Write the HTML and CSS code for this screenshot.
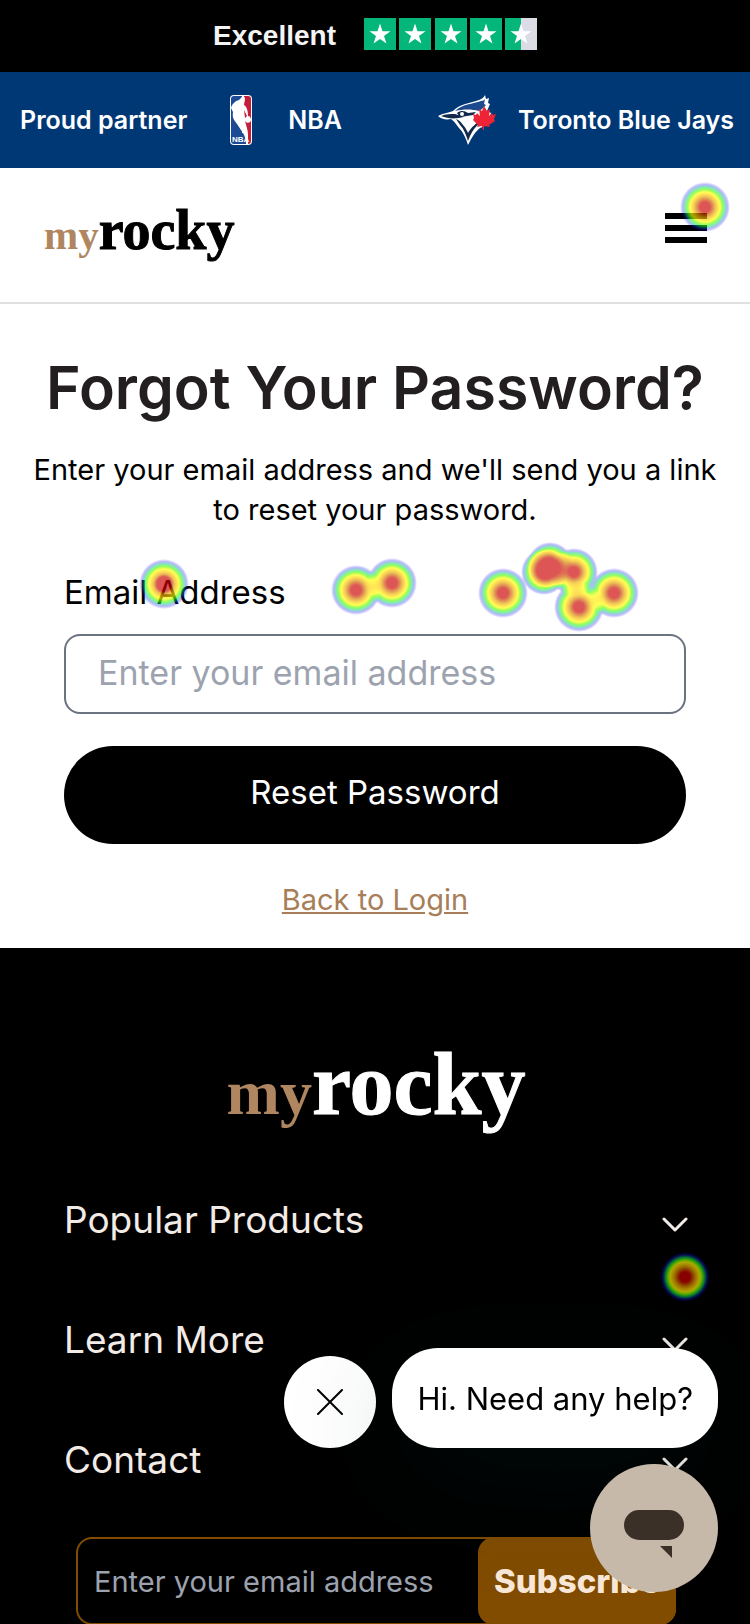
FILE: index.html
```html
<!DOCTYPE html>
<html lang="en">
<head>
<meta charset="utf-8">
<meta name="viewport" content="width=device-width, initial-scale=1">
<title>Forgot Your Password? | myrocky</title>
<link rel="stylesheet" href="styles.css">
</head>
<body>
<div class="rating">
  <span class="rating-word">Excellent</span>
  <svg class="rating-stars" width="173" height="32" viewBox="0 0 173 32" role="img" aria-label="4.5 out of 5 stars">
    <defs><path id="star" fill="#fff" d="M16 5.500l2.500 7.700h8l-6.500 4.700 2.500 7.700-6.500-4.700-6.500 4.700 2.500-7.700-6.500-4.700h8z"/></defs>
    <g fill="#04b67a">
      <rect width="32" height="32"/><rect x="35" width="32" height="32"/><rect x="71" width="32" height="32"/><rect x="106" width="32" height="32"/><rect x="141" width="16" height="32"/>
    </g>
    <rect x="157" width="16" height="32" fill="#dcdce6"/>
    <use href="#star"/><use href="#star" x="35"/><use href="#star" x="71"/><use href="#star" x="106"/><use href="#star" x="141"/>
  </svg>
</div>

<div class="partners">
  <span>Proud partner</span>
  <span class="partner">
    <svg width="22" height="50" viewBox="0 0 22 50" aria-hidden="true">
      <rect width="22" height="50" rx="4" fill="#fff"/>
      <path d="M4 1h8v48H4a3 3 0 0 1-3-3V4a3 3 0 0 1 3-3z" fill="#1d4a94"/>
      <path d="M11 38h6v11h-6z" fill="#1d4a94"/>
      <path d="M14 1h4a3 3 0 0 1 3 3v42a3 3 0 0 1-3 3h-1c1-9-1-15-4-20z" fill="#c41e3a"/>
      <path d="M11 3c1-2 4-2 4 1 0 2-1 4-1 6 3 2 4 6 4 11 2 0 3 2 3 4s-3 4-5 2l-1-1c1 4 3 9 3 14v9h-2c0-4-1-8-3-11-2-3-4-6-6-9-3-4-5-6-4-12l-2-4c1-4 4-7 8-8z" fill="#fff"/>
      <path d="M14 15l3 6-2 2z" fill="#c41e3a"/>
      <text x="2" y="47" class="nba-mark">NBA</text>
    </svg>
    <span>NBA</span>
  </span>
  <span class="partner partner-jays">
    <svg width="58" height="50" viewBox="0 0 58 50" aria-hidden="true">
      <path d="M0 21c5-3 10-3 15-5 6-7 18-8 26-11 3-1 5-3 6-5l1 4 3-1-1 5 2 1-3 7 4 2-4 12-7 3c-5 4-8 9-12 17-2-7-5-13-9-17-3-4-5-7-8-9-5 1-10 0-13-3z" fill="#fff"/>
      <path d="M17 16c7-7 18-7 26-10 2 0 3-1 4-2l-1 5 2 1-4 4-3 2c-8-2-15-2-24 0z" fill="#1d4a8c"/>
      <path d="M3 21c5-2 9-2 14-2l9 3c-8 2-16 2-23-1z" fill="#13294b"/>
      <path d="M18 24c3 1 5 3 7 6 3 3 4 6 5 8 3-5 5-7 9-10l2 1c-5 4-8 9-11 17-2-6-4-12-8-16z" fill="#13294b"/>
      <path d="M19 18c4-3 8-2 11 0l8-1-3 3-12 2c-2-1-3-2-4-4z" fill="#13294b"/>
      <circle cx="24" cy="19" r="2" fill="#fff"/>
      <path d="M46 11l3 5 3-2-1 7 3-3 1 2 3-1-2 5 1 2-6 4 1 2-6-1v4h-1l-1-4-5 1 1-2-5-5 1-2-1-4 3 1 1-2 3 3-1-7 3 2z" fill="#ee2436"/>
    </svg>
    <span>Toronto Blue Jays</span>
  </span>
</div>

<header class="header">
  <a class="logo" href="#home" aria-label="myrocky"><span class="logo-my">my</span><span class="logo-rocky">rocky</span></a>
  <button class="menu" type="button" aria-label="Open menu"><i></i><i></i><i></i></button>
</header>

<main class="main">
  <h1 class="title">Forgot Your Password?</h1>
  <p class="lead">Enter your email address and we'll send you a link to reset your password.</p>
  <form class="form">
    <label class="label" for="email">Email Address</label>
    <input class="field" id="email" type="email" placeholder="Enter your email address">
    <button class="submit" type="submit">Reset Password</button>
    <a class="back" href="#login">Back to Login</a>
  </form>
</main>

<footer class="footer">
  <a class="logo logo-large" href="#home" aria-label="myrocky"><span class="logo-my">my</span><span class="logo-rocky">rocky</span></a>
  <nav class="sections">
    <button class="section" type="button">Popular Products
      <svg width="26" height="16" viewBox="0 0 26 16" aria-hidden="true"><path d="M2 2l11 11L24 2"/></svg></button>
    <button class="section" type="button">Learn More
      <svg width="26" height="16" viewBox="0 0 26 16" aria-hidden="true"><path d="M2 2l11 11L24 2"/></svg></button>
    <button class="section" type="button">Contact
      <svg width="26" height="16" viewBox="0 0 26 16" aria-hidden="true"><path d="M2 2l11 11L24 2"/></svg></button>
  </nav>
  <form class="newsletter">
    <input class="newsletter-field" type="email" aria-label="Email for newsletter" placeholder="Enter your email address">
    <button class="newsletter-button" type="submit">Subscribe</button>
  </form>
</footer>

<aside class="chat">
  <div class="chat-row">
    <button class="chat-close" type="button" aria-label="Dismiss message">
      <svg width="26" height="26" viewBox="0 0 26 26" aria-hidden="true"><path d="M1 1l24 24M25 1L1 25" stroke="#000" stroke-width="2" stroke-linecap="round"/></svg>
    </button>
    <button class="chat-message" type="button">Hi. Need any help?</button>
  </div>
  <button class="chat-open" type="button" aria-label="Open chat">
    <svg width="60" height="48" viewBox="0 0 60 48" aria-hidden="true"><rect width="60" height="30" rx="15" fill="#3b3028"/><path d="M36 36h12v12z" fill="#3b3028"/></svg>
  </button>
</aside>

<svg class="heatmap" width="750" height="1320" viewBox="0 0 750 1320" aria-hidden="true">
  <defs>
    <radialGradient id="heat"><stop offset="0" stop-color="#fff"/><stop offset="1" stop-color="#fff" stop-opacity="0"/></radialGradient>
    <filter id="ramp" filterUnits="userSpaceOnUse" x="0" y="0" width="750" height="1320" color-interpolation-filters="sRGB">
      <feColorMatrix values="0 0 0 1 0  0 0 0 1 0  0 0 0 1 0  0 0 0 1 0"/>
      <feComponentTransfer>
        <feFuncR type="table" tableValues="0 .1 0 .4 1 1 .88 .82 .8 .8 .8"/>
        <feFuncG type="table" tableValues="0 .1 .85 1 1 .8 .6 .3 0 0 0"/>
        <feFuncB type="table" tableValues="1 1 .4 0 0 0 0 0 0 0 0"/>
        <feFuncA type="table" tableValues="0 .3 .5 .66 .67 .67 .67 .67 .67 .67 .67"/>
      </feComponentTransfer>
    </filter>
  </defs>
  <g filter="url(#ramp)" fill="url(#heat)">
    <circle cx="705" cy="207" r="25"/>
    <circle cx="164" cy="584" r="25"/><circle cx="164" cy="584" r="10"/>
    <circle cx="356" cy="590" r="25"/><circle cx="392" cy="583" r="25"/>
    <circle cx="503" cy="593" r="25"/><circle cx="544" cy="572" r="23"/>
    <circle cx="550" cy="565" r="23"/><circle cx="574" cy="572" r="24"/>
    <circle cx="579" cy="607" r="25"/><circle cx="614" cy="593" r="25"/>
    <circle cx="685" cy="1277" r="25"/>
  </g>
</svg>
</body>
</html>
```
FILE: styles.css
```css
* { box-sizing: border-box; }
body { margin: 0; position: relative; background: #fff; color: #000; font-family: Inter, "Open Sans", sans-serif; }
button, input { font: inherit; color: inherit; border: 0; margin: 0; padding: 0; background: none; }
svg { display: block; flex: none; fill: none; }
a { color: inherit; }

.rating { display: flex; align-items: center; justify-content: center; gap: 28px; height: 72px; padding-bottom: 4px; background: #000; color: #f4f4f4; }
.rating-word { padding-top: 4px; font: 700 28px/32px "Liberation Sans", sans-serif; }

.partners { display: flex; align-items: center; gap: 43px; height: 96px; padding: 0 20px; background: #003876; color: #fff; font-size: 25px; font-weight: 600; line-height: 32px; white-space: nowrap; overflow: hidden; }
.partner { display: flex; align-items: center; gap: 36px; }
.partner-jays { gap: 22px; margin-left: 53px; }
.nba-mark { font: 700 8px "Liberation Sans", sans-serif; fill: #fff; }

.header { display: flex; align-items: flex-start; justify-content: space-between; height: 136px; padding: 34px 43px 0 44px; border-bottom: 2px solid #e0e0e0; }
.logo { display: flex; align-items: baseline; font-family: "Liberation Serif", serif; font-weight: 700; font-size: 56px; line-height: 56px; text-decoration: none; -webkit-text-stroke: 1px currentColor; }
.logo-my { color: #b08660; font-size: 41px; -webkit-text-stroke: 0; }
.menu { display: flex; flex-direction: column; gap: 6px; width: 42px; margin-top: 11px; }
.menu i { height: 6px; background: #000; }

.main { padding: 44px 20px 28px; text-align: center; }
.title { margin: 0; color: #231f20; font-size: 59px; font-weight: 600; line-height: 80px; }
.lead { margin: 22px 0 0; font-size: 29px; line-height: 40px; }
.form { display: flex; flex-direction: column; margin: 38px 44px 0; font-size: 34px; }
.label { font-size: 33px; text-align: left; line-height: 48px; }
.field { height: 80px; margin-top: 18px; padding: 0 32px 4px; border: 2px solid #6b7280; border-radius: 16px; }
.field::placeholder, .newsletter-field::placeholder { color: #9ca3af; opacity: 1; }
.submit { height: 98px; margin-top: 32px; padding-bottom: 6px; border-radius: 49px; background: #000; color: #fff; font-size: 33px; }
.back { align-self: center; margin-top: 36px; color: #a77e58; font-size: 29px; line-height: 40px; }

.footer { padding: 93px 62px 0 64px; background: #000; color: #f3ebe6; }
.logo-large { justify-content: center; color: #fff; font-size: 88px; line-height: 88px; }
.logo-large .logo-my { font-size: 64px; }
.sections { display: flex; flex-direction: column; margin-top: 22px; }
.section { display: flex; align-items: center; justify-content: space-between; height: 120px; font-size: 37px; text-align: left; }
.section svg { stroke: #f3ebe6; stroke-width: 3; stroke-linecap: round; stroke-linejoin: round; margin-top: 12px; }
.newsletter { display: flex; height: 88px; margin: 18px 12px 0; border: 2px solid #814c00; border-radius: 16px; }
.newsletter-field { flex: 1; min-width: 0; padding-left: 16px; font-size: 29px; }
.newsletter-button { width: 198px; margin: -2px; padding-left: 16px; border-radius: 16px; background: #814c00; color: #f9e8d8; font-size: 33px; font-weight: 800; text-align: left; }

.chat { position: fixed; right: 32px; bottom: 32px; display: flex; flex-direction: column; align-items: flex-end; gap: 16px; }
.chat-row { display: flex; align-items: flex-end; gap: 16px; }
.chat-close { display: grid; place-items: center; width: 92px; height: 92px; border-radius: 50%; background: #fff; }
.chat-message { height: 100px; padding: 0 25px; border-radius: 46px; background: #fff; color: #000; font-size: 31px; box-shadow: 0 30px 120px rgba(0, 50, 50, 0.2); white-space: nowrap; }
.chat-open { display: grid; place-items: center; width: 128px; height: 128px; padding-top: 12px; border-radius: 50%; background: #c6b9aa; }

.heatmap { position: absolute; top: 0; left: 0; pointer-events: none; }
```
